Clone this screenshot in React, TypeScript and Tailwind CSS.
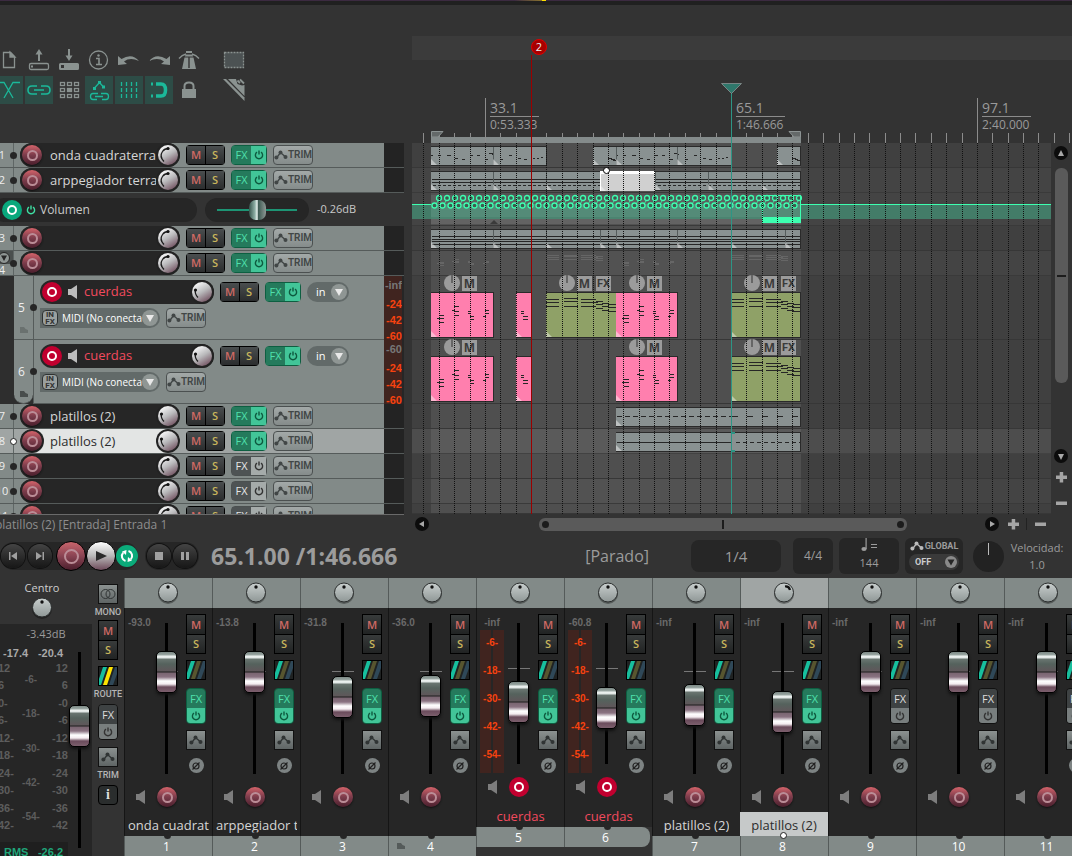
import React from "react";
import clsx from "clsx";

const PITCH = 15.375;
const gridX = (k: number) => Math.round(11.4 + PITCH * k);
const GRID = Array.from({ length: 160 }, (_, k) => k);

/* ---------- small glyphs ---------- */

function PowerIcon({ className }: { className?: string }) {
  return (
    <svg viewBox="0 0 10 10" className={clsx("h-2.5 w-2.5", className)} fill="none" stroke="currentColor" strokeWidth="1.4">
      <path d="M3 2.2a3.6 3.6 0 1 0 4 0M5 .5v4" />
    </svg>
  );
}

function EnvIcon({ className }: { className?: string }) {
  return (
    <svg viewBox="0 0 14 10" className={clsx("h-2.5 w-3.5 shrink-0", className)} fill="currentColor">
      <path d="M2.5 8 6.5 2.500 11.500 7" fill="none" stroke="currentColor" strokeWidth="1.300" />
      <circle cx="2.400" cy="7.600" r="2" />
      <circle cx="6.500" cy="2.500" r="2" />
      <circle cx="11.500" cy="7" r="2" />
    </svg>
  );
}

function SpeakerIcon({ className }: { className?: string }) {
  return (
    <svg viewBox="0 0 9 14" className={clsx("h-3.5 w-[9px]", className)} fill="currentColor">
      <path d="M0 4h3l6-4v14l-6-4H0z" />
    </svg>
  );
}

function FolderIcon({ className }: { className?: string }) {
  return (
    <svg viewBox="0 0 8 6" className={clsx("h-1.5 w-2", className)} fill="currentColor">
      <path d="M0 0h4l1.500 2L8 3v3H0z" />
    </svg>
  );
}

/* ---------- shared controls ---------- */

function RecordButton({ armed, label }: { armed?: boolean; label: string }) {
  return (
    <button
      aria-label={label}
      className={clsx(
        "flex h-5 w-5 shrink-0 items-center justify-center rounded-full",
        armed ? "bg-[#c1002f]" : "bg-gradient-to-b from-[#d4636a] via-[#7c3c4b] to-[#4c1f2d] shadow-[0_1px_2px_#111]"
      )}
    >
      <span className={clsx("rounded-full", armed ? "h-2.5 w-2.5 border-2 border-white" : "h-[11px] w-[11px] border-2 border-[#bb8d97]")} />
    </button>
  );
}

function PanKnob({ hard }: { hard?: boolean }) {
  return (
    <svg viewBox="0 0 22 24" className="h-6 w-[22px] shrink-0">
      <defs>
        <linearGradient id="pan" x1="0" y1="0" x2="0" y2="1">
          <stop offset="0" stopColor="#c9cfce" />
          <stop offset="1" stopColor="#8f9796" />
        </linearGradient>
      </defs>
      <circle cx="11" cy="13" r="10" fill="#00000055" />
      <circle cx="11" cy="11.500" r="9.500" fill="url(#pan)" stroke="#2b2e2e" />
      {hard ? (
        <path d="M12 5.500q4-.5 5 3.500" stroke="#111" strokeWidth="2.200" fill="none" />
      ) : (
        <circle cx="11" cy="6" r="1.700" fill="#111" />
      )}
    </svg>
  );
}

function VolumeKnob({ low }: { low?: boolean }) {
  return (
    <svg viewBox="0 0 24 24" className="h-6 w-6 shrink-0">
      <defs>
        <linearGradient id="vol" x1="0.200" y1="0" x2="0.800" y2="1">
          <stop offset="0" stopColor="#ffffff" />
          <stop offset="0.500" stopColor="#b9b9bb" />
          <stop offset="1" stopColor="#6e4c5c" />
        </linearGradient>
      </defs>
      <circle cx="12" cy="12" r="12" fill="#222" />
      <circle cx="12" cy="12" r="10" fill="url(#vol)" />
      <path d={low ? "M8 17.500q-3.500-3.500-2.500-8" : "M8 18.500q-5-5-1.500-10 2-3 6-3"} stroke="#1b1b1b" strokeWidth="1.300" fill="none" />
      <circle cx={low ? 5.500 : 12} cy={low ? 10 : 5.500} r="1.600" fill="#111" />
    </svg>
  );
}

function MuteSolo() {
  return (
    <div className="flex h-5 w-[39px] shrink-0 gap-px rounded-sm bg-black p-px text-[11px] leading-[18px] font-semibold">
      <button className="flex-1 bg-gradient-to-b from-[#4a4e4f] to-[#2b2d2e] text-[#cf6a64]">M</button>
      <button className="flex-1 bg-gradient-to-b from-[#4a4e4f] to-[#2b2d2e] text-[#c9b65c]">S</button>
    </div>
  );
}

function FxButtons({ on = true }: { on?: boolean }) {
  return (
    <div className={clsx("flex h-5 w-9 shrink-0 rounded-sm border text-[11px] leading-[18px]", on ? "border-[#0d5f41]" : "border-[#4b5050]")}>
      <button className={clsx("w-[19px]", on ? "bg-[#257a5c] text-[#4fe0ac]" : "bg-[#4e5354] text-[#e6e6e6]")}>FX</button>
      <button aria-label="FX bypass" className={clsx("flex flex-1 items-center justify-center", on ? "bg-[#42c598] text-[#0e5a3f]" : "bg-[#a5abaa] text-[#333]")}>
        <PowerIcon />
      </button>
    </div>
  );
}

function TrimButton() {
  return (
    <button className="flex h-5 w-10 shrink-0 items-center justify-center rounded-sm border border-[#4b5050] bg-gradient-to-b from-[#a3a9a8] to-[#858c8b] text-[#414646]">
      <EnvIcon />
      <span className="font-['Roboto',sans-serif] text-[10px] leading-[18px] font-semibold">TRIM</span>
    </button>
  );
}

const thumb =
  "[&::-webkit-slider-thumb]:appearance-none [&::-webkit-slider-thumb]:h-[42px] [&::-webkit-slider-thumb]:w-[21px] [&::-webkit-slider-thumb]:rounded-[5px] [&::-webkit-slider-thumb]:border [&::-webkit-slider-thumb]:border-black [&::-webkit-slider-thumb]:shadow-[0_2px_3px_#111] [&::-webkit-slider-thumb]:bg-[linear-gradient(#7d8a86_0px,#9aa7a3_3px,#eef3f1_4px,#dfe6e4_6px,#6a7671_7px,#55625d_12px,#5f575a_19px,#1d1d1d_20px,#7a6571_21px,#8a7281_25px,#ffffff_29px,#f4ecf0_32px,#6b4c5c_35px,#7c5f6d_40px)]";

function Fader({ value, max, height, label }: { value: number; max: number; height: "master" | "long" | "short"; label: string }) {
  return (
    <input
      type="range"
      min={0}
      max={max}
      defaultValue={value}
      aria-label={label}
      className={clsx(
        "block w-[21px] appearance-none bg-transparent bg-[linear-gradient(#000,#000)] bg-[length:3px_100%] bg-center bg-no-repeat [direction:rtl] [writing-mode:vertical-lr]",
        height === "master" && "h-[196px]",
        height === "long" && "h-[151px]",
        height === "short" && "h-[141px]",
        thumb
      )}
    />
  );
}

/* ---------- main toolbar ---------- */

function Tool({ label, on, children }: { label: string; on?: boolean; children: React.ReactNode }) {
  return (
    <button aria-label={label} className={clsx("h-7 w-7", on ? "bg-[#2d4c46] text-[#1bb99a]" : "text-[#8a9290]")}>
      <svg viewBox="0 0 28 28" className="h-7 w-7" fill="none" stroke="currentColor" strokeWidth="1.300">
        {children}
      </svg>
    </button>
  );
}

function Toolbar() {
  return (
    <div className="-ml-[5px] flex h-[138px] gap-[17px] pt-[41px]">
      <div className="flex flex-col gap-0.5">
        <div className="flex gap-0.5">
          <Tool label="New project">
            <path d="M8.500 6.500h7l4 4v11h-11z" />
            <path d="M15 6v5h5z" fill="currentColor" />
          </Tool>
          <Tool label="Open project">
            <rect x="4.500" y="17.500" width="19" height="6" rx="1.500" />
            <path d="M14 15V6" strokeWidth="2" />
            <path d="M10.500 8.500 14 3l3.500 5.500z" fill="currentColor" stroke="none" />
            <path d="M6 19.500h2v2H6z" fill="currentColor" stroke="none" />
          </Tool>
          <Tool label="Save project">
            <path d="M5.500 17h17q1.500 0 1.500 1.500v4q0 1.500-1.500 1.500h-17Q4 24 4 22.500v-4Q4 17 5.500 17zM6 19v3h3v-3z" fill="currentColor" stroke="none" fillRule="evenodd" />
            <path d="M14 3v8" strokeWidth="2" />
            <path d="M10.500 9.500 14 15l3.500-5.500z" fill="currentColor" stroke="none" />
          </Tool>
          <Tool label="Project settings">
            <circle cx="13.500" cy="14" r="9" />
            <path d="M11 12.500h3v6M11 18.500h6" strokeWidth="1.600" />
            <circle cx="13.500" cy="9.500" r="1.200" fill="currentColor" stroke="none" />
          </Tool>
          <Tool label="Undo">
            <path d="M3 10v9l9-1-3-2.500q6-4.500 15-.5Q17 6.500 6.500 13z" fill="currentColor" stroke="none" />
          </Tool>
          <Tool label="Redo">
            <path d="M25 10v9l-9-1 3-2.500q-6-4.500-15-.5Q11 6.500 21.500 13z" fill="currentColor" stroke="none" />
          </Tool>
          <Tool label="Metronome">
            <path d="M4 12.500Q7 9 11 8M24 12.500Q21 9 17 8" />
            <path d="M11 5h6v2h-6zM10.500 8.500h7l.5 2h-8zM9.500 11.500h3.800V22h1.400V11.500h3.800L21 23H7z" fill="currentColor" stroke="none" />
          </Tool>
        </div>
        <div className="flex gap-0.5">
          <Tool label="Auto crossfade" on>
            <path d="M2 6.500h7L18 22M25 6.500h-7L9 22" />
          </Tool>
          <Tool label="Item grouping" on>
            <path d="M12 10H7q-4 0-4 4t4 4h5M16 10h5q4 0 4 4t-4 4h-5M9 14h10" strokeWidth="1.600" />
          </Tool>
          <Tool label="Ripple editing">
            {[6, 12, 18].map((y) =>
              [5, 12, 19].map((x) => (
                <rect key={`${x}-${y}`} x={x + 0.5} y={y + 0.5} width="4" height="3" fill={x === 12 && y === 12 ? "currentColor" : "none"} />
              ))
            )}
          </Tool>
          <Tool label="Envelope locking" on>
            <path d="m9.500 12 5-5.500 4 4.500M13 17.500H8q-2.500 0-2.500 3T8 23.500h4M16 17.500h5q2.500 0 2.500 3t-2.500 3h-4M10 20.500h8" />
            <path d="M8 11h3v3H8zM13 5h3v3h-3zM17 9.500h3v3h-3z" fill="currentColor" stroke="none" />
          </Tool>
          <Tool label="Grid" on>
            <path d="M6.500 6v16M11.500 6v16M16.500 6v16M21.500 6v16" strokeDasharray="4 2" />
          </Tool>
          <Tool label="Snap" on>
            <path d="M11 8h5q4.500 0 4.500 6T16 20h-5" strokeWidth="3.500" />
            <path d="M6 6.500h2v3H6zM6 18.500h2v3H6z" fill="currentColor" stroke="none" />
          </Tool>
          <Tool label="Lock">
            <path d="M7 13h14v9H7z" fill="currentColor" stroke="none" />
            <path d="M9.500 13v-3q0-3.500 4.500-3.500t4.500 3.500v3" strokeWidth="2" />
          </Tool>
        </div>
      </div>
      <div className="flex flex-col gap-0.5">
        <Tool label="Marquee">
          <rect x="4.500" y="6.500" width="19" height="15" fill="#4c5253" strokeDasharray="2 1" />
        </Tool>
        <Tool label="Ruler">
          <path d="M3 3h3l18.500 18.500V25z" fill="currentColor" stroke="none" />
          <path d="M8 3h8l1.500 5 4.500 1.500 2.500-.5v11z" fill="currentColor" stroke="none" />
          <path d="M17.500 4.500 20 7M20 3.500l4 4" strokeWidth="1.800" />
        </Tool>
      </div>
    </div>
  );
}

/* ---------- track control panel ---------- */

interface Track {
  id: number;
  name?: string;
  fx: boolean;
  lowKnob?: boolean;
  selected?: boolean;
  folder?: boolean;
}

const topTracks: Track[] = [
  { id: 1, name: "onda cuadraterra", fx: true },
  { id: 2, name: "arppegiador terra", fx: true },
];
const midTracks: Track[] = [
  { id: 3, fx: true },
  { id: 4, fx: true, folder: true },
];
const lowTracks: Track[] = [
  { id: 7, name: "platillos (2)", fx: true, lowKnob: true },
  { id: 8, name: "platillos (2)", fx: true, lowKnob: true, selected: true },
  { id: 9, fx: false },
  { id: 10, fx: false },
  { id: 11, fx: false },
];

function TrackNumber({ track }: { track: Track }) {
  if (!track.folder) {
    return <span className="-ml-2 w-5 shrink-0 text-center text-[11px] text-[#eee]">{track.id}</span>;
  }
  return (
    <span className="-ml-2 flex w-5 shrink-0 flex-col items-center self-stretch text-[11px] leading-[11px] text-[#eee]">
      <button aria-label="Collapse folder" className="ml-1 flex h-3.5 w-full items-center justify-center bg-[#4a4f4e]">
        <svg viewBox="0 0 12 12" className="h-3 w-3">
          <circle cx="6" cy="6" r="5.500" fill="#8f9694" stroke="#262626" />
          <path d="M3 3.500h6L6 9z" fill="#262626" />
        </svg>
      </button>
      {track.id}
    </span>
  );
}

function TrackRow({ track }: { track: Track }) {
  const sel = track.selected;
  return (
    <div className={clsx("flex h-[25px] shrink-0 border-b border-[#555b5a]", sel ? "bg-[#a0a5a4]" : "bg-[#828a88]")}>
      <div className="flex flex-1 items-center overflow-hidden">
        <TrackNumber track={track} />
        <span className="relative ml-px w-px shrink-0 self-stretch bg-[#5f6665]">
          <span className={clsx("absolute top-[9px] -left-[3px] h-[7px] w-[7px] rounded-full", sel ? "border border-[#222] bg-white" : "bg-[#262626]")} />
        </span>
        <div
          className={clsx(
            "ml-1.5 flex h-6 w-40 shrink-0 items-center rounded-full text-[13px]",
            sel ? "bg-[#e3e5e4] text-[#2c2c2c]" : "bg-[#262626] text-[#d6d6d6]"
          )}
        >
          <span className="flex h-6 w-6 shrink-0 items-center justify-center rounded-full bg-[#262626]">
            <RecordButton label={`Arm track ${track.id}`} />
          </span>
          <span className="ml-1.5 flex-1 overflow-hidden leading-5 whitespace-nowrap">{track.name}</span>
          <VolumeKnob low={track.lowKnob} />
        </div>
        <div className="ml-1.5 flex gap-1.5">
          <MuteSolo />
          <FxButtons on={track.fx} />
          <TrimButton />
        </div>
      </div>
      <div className="w-5 shrink-0 bg-[#232323]" />
    </div>
  );
}

function ArrowDisc() {
  return (
    <span className="pointer-events-none absolute top-0.5 right-0.5 flex h-4 w-4 items-center justify-center rounded-full bg-[#8f9694]">
      <svg viewBox="0 0 8 7" className="h-[7px] w-2">
        <path d="M0 0h8L4 7z" fill="#e9e9e9" />
      </svg>
    </span>
  );
}

function ArmedTrack({ id, levels, last }: { id: number; levels: string[]; last?: boolean }) {
  return (
    <div className="flex h-16 shrink-0 bg-[#2e2e2e]">
      <div className={clsx("relative ml-3.5 w-[19px] shrink-0 border-b border-[#555b5a] bg-[#828a88]", last && "rounded-b-xl")}>
        <span className="block pt-6 pr-1 text-center text-[12px] leading-4 text-[#eee]">{id}</span>
        <FolderIcon className={clsx("absolute bottom-1.5 left-1.5", last ? "text-[#484d4c]" : "text-[#6a716f]")} />
      </div>
      <div className="relative flex flex-1 flex-col gap-1 border-b border-l border-[#555b5a] bg-[#828a88] pt-1 pl-1.5">
        <span className="absolute top-7 -left-1 h-[7px] w-[7px] rounded-full bg-[#262626]" />
        <div className="flex items-center">
          <div className="flex h-6 w-[174px] shrink-0 items-center rounded-full bg-[#262626] pl-0.5 text-[13px] text-[#f24a5e]">
            <RecordButton armed label={`Disarm track ${id}`} />
            <SpeakerIcon className="ml-1.5 text-[#bcbcbc]" />
            <span className="ml-[7px] flex-1">cuerdas</span>
            <VolumeKnob low />
          </div>
          <div className="ml-1.5 flex gap-1.5">
            <MuteSolo />
            <FxButtons />
            <label className="relative h-5 w-[42px] rounded-full bg-[#626a69] text-[11px] text-white">
              <select aria-label="Monitor mode" className="h-5 w-full appearance-none pl-[9px] leading-5 outline-none">
                <option>in</option>
              </select>
              <ArrowDisc />
            </label>
          </div>
        </div>
        <div className="flex items-center gap-1.5">
          <label className="relative flex h-5 w-[120px] items-center rounded-r-full bg-[#626a69] pl-0.5 text-[10px] text-white">
            <button className="h-4 w-4 shrink-0 rounded-sm border border-[#2e3232] bg-[#9aa09f] font-['Roboto',sans-serif] text-[8px] leading-[7px] font-bold text-[#333]">
              IN
              <br />
              FX
            </button>
            <select aria-label="Input" className="h-5 w-[84px] appearance-none overflow-hidden pl-1 whitespace-nowrap outline-none">
              <option>MIDI (No conecta</option>
            </select>
            <ArrowDisc />
          </label>
          <TrimButton />
        </div>
      </div>
      <div className="flex w-5 shrink-0 flex-col overflow-hidden border-r-2 border-[#262626] bg-[#40241f] pt-px text-right font-['Liberation_Sans',sans-serif] text-[11px] leading-4 font-bold text-[#f7420f]">
        {levels.map((l, i) => (
          <span key={l + i} className={clsx("-ml-1 whitespace-nowrap", i === 0 && "pb-[3px] text-[#777]")}>
            {l}
          </span>
        ))}
      </div>
    </div>
  );
}

function EnvelopeLane() {
  return (
    <div className="flex h-[33px] shrink-0 items-center text-[#c9c9c9]">
      <div className="-ml-2 flex h-6 w-[205px] shrink-0 items-center rounded-full bg-[#262626] pl-2.5 text-[12px]">
        <button aria-label="Arm envelope" className="flex h-5 w-5 items-center justify-center rounded-full bg-[#09a87c]">
          <span className="h-2.5 w-2.5 rounded-full border-2 border-white" />
        </button>
        <PowerIcon className="ml-1 text-[#3fe0a4]" />
        <span className="ml-1">Volumen</span>
      </div>
      <div className="ml-2 flex h-6 w-[104px] shrink-0 items-center rounded-full bg-[#262626] px-3">
        <input
          type="range"
          aria-label="Volumen"
          defaultValue={50}
          className="h-5 w-full appearance-none bg-[linear-gradient(#1d9474,#1d9474)] bg-[length:100%_2px] bg-center bg-no-repeat [&::-webkit-slider-thumb]:h-5 [&::-webkit-slider-thumb]:w-[17px] [&::-webkit-slider-thumb]:appearance-none [&::-webkit-slider-thumb]:rounded-[7px] [&::-webkit-slider-thumb]:bg-[linear-gradient(90deg,#35534b,#8fb0a6_35%,#e8f2ef_48%,#3d5a52_55%,#8d9794)]"
        />
      </div>
      <span className="ml-2 text-[11px]">-0.26dB</span>
    </div>
  );
}

function TrackPanel() {
  return (
    <div className="flex h-[371px] w-[404px] flex-col overflow-hidden">
      {topTracks.map((t) => (
        <TrackRow key={t.id} track={t} />
      ))}
      <EnvelopeLane />
      {midTracks.map((t) => (
        <TrackRow key={t.id} track={t} />
      ))}
      <ArmedTrack id={5} levels={["-inf", "-24", "-42", "-60"]} />
      <ArmedTrack id={6} levels={["-60", "-24", "-42", "-60"]} last />
      {lowTracks.map((t) => (
        <TrackRow key={t.id} track={t} />
      ))}
    </div>
  );
}

/* ---------- arrange view ---------- */

type Note = [number, number, number];

const pinkNotes: Note[] = [
  [8, 22, 5], [6, 25, 7], [8, 29, 5], [23, 13, 5], [21, 17, 3], [23, 18, 5], [23, 22, 5],
  [37, 18, 3], [37, 20, 3], [39, 23, 4], [39, 26, 4], [54, 17, 4], [54, 20, 4], [52, 23, 3],
];
const pinkTail: Note[] = [[5, 18, 3], [5, 20, 3], [7, 23, 5], [7, 26, 5]];
const greenNotes: Note[] = [
  [0, 6, 13], [0, 9, 13], [0, 13, 13], [18, 5, 14], [18, 8, 14], [18, 13, 14], [35, 6, 15], [35, 9, 17], [35, 13, 15],
  [50, 8, 7], [50, 11, 7], [50, 15, 7], [56, 10, 7], [56, 13, 7], [56, 17, 7], [62, 11, 8], [62, 14, 8], [62, 18, 8],
];
const melody: Note[] = [
  [0, 8, 2], [7, 8, 3], [16, 8, 4], [24, 11, 3], [31, 12, 3], [39, 8, 3], [46, 8, 3], [54, 12, 3], [58, 6, 4], [61, 7, 2],
  [69, 12, 3], [78, 8, 3], [87, 11, 3], [93, 12, 3], [102, 11, 2], [106, 11, 2], [110, 10, 2],
];
const melodyStart: Note[] = [[15, 11, 4], [18, 12, 4], [20, 13, 3], ...melody.map(([x, y, w]): Note => [x + 23, y, w])];
const melodyEnd: Note[] = [[15, 11, 4], [18, 12, 3], [20, 13, 3]];
const straight = (w: number, ...ys: number[]) => ys.map((y): Note => [1, y, w]);
const dashes = (from: number, to: number, step: number, len: number, y: number) => {
  const out: Note[] = [];
  for (let x = from; x < to; x += step) out.push([x, y, len]);
  return out;
};

const tones = {
  gray: "border-y border-r border-[#2a2a2a] bg-[#899191]",
  white: "border-t-3 border-l border-white bg-[#d0d0d0]",
  pink: "border-y border-r border-[#2a2a2a] bg-[#ff7fae]",
  green: "border-y border-r border-[#2a2a2a] bg-[#8fa167]",
};

interface ClipProps {
  x: number;
  w: number;
  tone?: keyof typeof tones;
  tall?: boolean;
  notes: Note[];
  cuts?: number[];
}

function Clip({ x, w, tone = "gray", tall, notes, cuts = [0] }: ClipProps) {
  const h = tall ? 46 : 20;
  return (
    <div className={clsx("absolute overflow-hidden", tones[tone], tall ? "top-4 h-[46px]" : "top-[3px] h-5")} style={{ left: x, width: w }}>
      <svg width={w} height={h} shapeRendering="crispEdges" className="block">
        {notes.map(([nx, ny, nw], i) => (
          <rect key={i} x={nx} y={ny} width={nw} height="1" fill="#262626" />
        ))}
        {cuts.map((c) => (
          <g key={c}>
            {c > 0 && <rect x={c} y="0" width="1" height={h} fill="#555c5c" />}
            <path d={`M${c} ${h - 8}l6 6h-6z`} fill="#ffffff70" shapeRendering="auto" />
          </g>
        ))}
      </svg>
    </div>
  );
}

function ClipButtons({ x, fx }: { x: number; fx?: boolean }) {
  return (
    <div className="absolute -top-px flex items-end gap-0.5 text-[12px] leading-[15px] font-bold text-[#3b3b3b]" style={{ left: x }}>
      <button aria-label="Item volume" className="flex h-4 w-4 justify-center rounded-full bg-[#9b9b9b]">
        <span className="h-2 w-0.5 bg-[#666]" />
      </button>
      <button className="h-[15px] w-[15px] bg-[#9b9b9b]">M</button>
      {fx && <button className="ml-0.5 h-[15px] w-[15px] bg-[#9b9b9b] font-['Roboto',sans-serif] text-[11px]">FX</button>}
    </div>
  );
}

function Lane({ size = "short", shade, children }: { size?: "short" | "tall" | "env" | "fill"; shade?: "alt" | "selected"; children?: React.ReactNode }) {
  return (
    <div
      className={clsx(
        "relative w-full border-b border-[#00000022]",
        size === "short" && "h-[25px] shrink-0",
        size === "tall" && "h-16 shrink-0",
        size === "env" && "h-[33px] shrink-0",
        size === "fill" && "flex-1",
        shade === "selected" ? "bg-[#4d4d4d]" : shade === "alt" ? "bg-[#444444]" : "bg-[#404040]"
      )}
    >
      <div className="absolute inset-y-0 left-[19px] w-[370px] bg-white/8" />
      {children}
    </div>
  );
}

function EnvelopePoints() {
  const points = Array.from({ length: 46 }, (_, i) => i);
  return (
    <svg width="390" height="33" className="absolute top-0 left-0" fill="none">
      <g stroke="#3dffb0" strokeWidth="1.300">
        {points.map((i) => (
          <g key={i} fill="#3f5a50">
            <path d={`M${24 + i * 8} 11l2-3`} strokeWidth=".8" />
            <circle cx={27 + i * 8} cy="5" r="2.500" />
            <circle cx={22.500 + i * 8} cy="12.500" r="2.500" />
          </g>
        ))}
      </g>
      <rect x="350.500" y="2.500" width="38" height="26" stroke="#3dffb0" />
      <rect x="350" y="24" width="39" height="6" fill="#3dffb0" />
      <path d="M78 31l4-4 4 4z" fill="#3b3b3b" />
    </svg>
  );
}

function Ruler() {
  const labels = [
    { k: 4, bar: "33.1", time: "0:53.333" },
    { k: 20, bar: "65.1", time: "1:46.666" },
    { k: 36, bar: "97.1", time: "2:40.000" },
  ];
  return (
    <div className="relative h-[83px] shrink-0 overflow-hidden">
      {GRID.map((k) => (
        <span key={k} className="absolute bottom-0 h-2.5 w-px bg-[#8c8c8c]" style={{ left: gridX(k) }} />
      ))}
      <span className="absolute bottom-0 left-[19px] h-1.5 w-[370px] bg-[#848b8b]" />
      <svg width="370" height="6" className="absolute bottom-1.5 left-[19px]">
        <path d="M.5 6V.5H12L7 6zM369.500 6V.5H358l5 5.500z" fill="#646969" stroke="#8c9393" />
      </svg>
      {labels.map((l) => (
        <div key={l.k} className="absolute bottom-0 h-[45px] border-l border-[#8c8c8c] pl-1 text-[#9a9a9a]" style={{ left: gridX(l.k) }}>
          <div className="w-[49px] border-b border-[#8c8c8c] pt-0.5 text-[14px] leading-4">{l.bar}</div>
          <div className="text-[12px] leading-4">{l.time}</div>
        </div>
      ))}
    </div>
  );
}

function Arrange() {
  return (
    <div className="relative flex h-[371px] min-w-0 flex-1 flex-col overflow-hidden">
      <Lane>
        <Clip x={19} w={116} notes={melody} cuts={[0, 62]} />
        <Clip x={181} w={139} notes={melodyStart} cuts={[0, 23, 84]} />
        <Clip x={365} w={24} notes={melodyEnd} />
      </Lane>
      <Lane shade="alt">
        <Clip x={19} w={370} notes={[...straight(368, 7, 10), ...dashes(2, 368, 5, 3, 13)]} cuts={[0, 62, 115, 224, 277, 331]} />
        <Clip x={188} w={55} tone="white" notes={[]} />
      </Lane>
      <Lane size="env" shade="alt">
        <div className="absolute inset-x-0 top-[11px] h-[15px] bg-[#43c295]/45" />
        <div className="absolute top-[11px] right-0 left-[389px] h-px bg-[#3dffb0]" />
        <div className="absolute top-[11px] left-0 h-px w-[19px] bg-[#3dffb0]" />
        <div className="absolute top-0.5 left-[19px] h-[22px] w-[370px] bg-[#8fb5a6]/15" />
        <div className="absolute top-[26px] left-[19px] h-[5px] w-[370px] bg-white/10" />
        <EnvelopePoints />
      </Lane>
      <Lane>
        <Clip x={19} w={370} notes={straight(368, 6, 9, 11, 14)} cuts={[0, 62, 115, 169, 185, 246, 300, 354]} />
      </Lane>
      <Lane shade="alt">
        <svg width="390" height="24" className="absolute" shapeRendering="crispEdges">
          {[134, 319].map((x) =>
            greenNotes.slice(0, 12).map(([nx, ny, nw], i) => <rect key={`${x}-${i}`} x={x + nx} y={Math.round(ny / 2) + 1} width={nw} height="1" fill="#666" />)
          )}
          {[19, 204].map((x) =>
            pinkNotes.map(([nx, ny, nw], i) => <rect key={`${x}-${i}`} x={x + nx} y={Math.round(ny / 3) + 4} width={nw} height="1" fill="#666" />)
          )}
        </svg>
      </Lane>
      <Lane size="tall">
        <ClipButtons x={32} />
        <ClipButtons x={147} fx />
        <ClipButtons x={217} />
        <ClipButtons x={332} fx />
        <Clip x={19} w={63} tall tone="pink" notes={pinkNotes} />
        <Clip x={104} w={16} tall tone="pink" notes={pinkTail} />
        <Clip x={134} w={71} tall tone="green" notes={greenNotes} />
        <Clip x={204} w={62} tall tone="pink" notes={pinkNotes} />
        <Clip x={319} w={70} tall tone="green" notes={greenNotes} />
      </Lane>
      <Lane size="tall">
        <ClipButtons x={32} />
        <ClipButtons x={217} />
        <ClipButtons x={332} fx />
        <Clip x={19} w={63} tall tone="pink" notes={pinkNotes} />
        <Clip x={104} w={16} tall tone="pink" notes={pinkTail} />
        <Clip x={204} w={62} tall tone="pink" notes={pinkNotes} />
        <Clip x={319} w={70} tall tone="green" notes={greenNotes} />
      </Lane>
      <Lane>
        <Clip x={204} w={185} notes={[...dashes(1, 114, 8, 5, 8), ...dashes(116, 182, 15, 6, 8)]} />
      </Lane>
      <Lane shade="selected">
        <Clip x={204} w={185} notes={[[1, 9, 114], ...dashes(120, 184, 7, 4, 9)]} />
      </Lane>
      <Lane />
      <Lane shade="alt" />
      <Lane size="fill" />
      {GRID.map((k) => (
        <span key={k} className="pointer-events-none absolute inset-y-0 w-px bg-[repeating-linear-gradient(#111_0px,#111_1px,transparent_1px,transparent_2px)]" style={{ left: gridX(k) }} />
      ))}
      <span className="absolute top-6 left-[191px] h-[7px] w-[7px] rounded-full border border-black bg-white" />
      <span className="absolute top-[289px] left-[319px] h-5 w-1 border-y-2 border-[#2d9585]" />
    </div>
  );
}

function ArrowButton({ dir, className }: { dir: "up" | "down" | "left" | "right"; className?: string }) {
  const d = { up: "M4 10h6L7 4z", down: "M4 5h6l-3 6z", left: "M9 4v6L4 7z", right: "M5 4v6l5-3z" }[dir];
  return (
    <button aria-label={`Scroll ${dir}`} className={clsx("h-3.5 w-3.5 shrink-0 rounded-full bg-[#0c0c0c]", className)}>
      <svg viewBox="0 0 14 14" className="h-3.5 w-3.5">
        <path d={d} fill="#a8a8a8" />
      </svg>
    </button>
  );
}

function ZoomButton({ plus }: { plus?: boolean }) {
  return (
    <button aria-label={plus ? "Zoom in" : "Zoom out"} className="h-3 w-3 shrink-0">
      <svg viewBox="0 0 12 12" className="h-3 w-3" fill="#a5a5a5">
        <path d="M1 4.500h11v3.500H1z" />
        {plus && <path d="M4.700 1h3.500v10.500H4.700z" />}
      </svg>
    </button>
  );
}

function VerticalScroll() {
  return (
    <div className="flex w-[21px] shrink-0 flex-col items-center pt-[3px] pr-px">
      <ArrowButton dir="up" />
      <div className="flex w-[13px] flex-1 flex-col pt-2">
        <div className="flex h-[215px] items-center justify-center rounded-md bg-[#5a5a5a]">
          <span className="h-0.5 w-[9px] bg-[#1c1c1c]" />
        </div>
      </div>
      <ArrowButton dir="down" />
      <div className="flex h-[51px] flex-col items-center gap-[14px] pt-2">
        <ZoomButton plus />
        <ZoomButton />
      </div>
    </div>
  );
}

function HorizontalScroll() {
  return (
    <div className="flex h-5 shrink-0 items-center pr-[26px] pl-[3px]">
      <ArrowButton dir="left" />
      <div className="flex flex-1 pl-[110px]">
        <div className="flex h-[13px] w-[368px] items-center justify-between rounded-md bg-[#5a5a5a] px-[3px]">
          <span className="h-[7px] w-[7px] rounded-full bg-[#1c1c1c]" />
          <span className="h-[9px] w-0.5 bg-[#1c1c1c]" />
          <span className="h-[7px] w-[7px] rounded-full bg-[#1c1c1c]" />
        </div>
      </div>
      <ArrowButton dir="right" />
      <div className="ml-2 flex items-center gap-[7px]">
        <ZoomButton plus />
        <span className="h-3 w-px bg-[#222]" />
        <ZoomButton />
      </div>
    </div>
  );
}

function Timeline() {
  return (
    <div className="relative flex min-w-0 flex-1 flex-col overflow-hidden">
      <div className="mt-[31px] h-6 shrink-0 bg-[#3b3b3b]" />
      <Ruler />
      <div className="flex">
        <Arrange />
        <VerticalScroll />
      </div>
      <HorizontalScroll />
      {/* marker and edit cursor run over ruler and lanes */}
      <span className="absolute top-[50px] bottom-5 left-[119px] w-px bg-[#9c0000]" />
      <span className="absolute top-[34px] left-[119px] h-4 w-4 rounded-full border border-[#e00000] bg-[#a80000] text-center text-[11px] leading-[14px] text-[#eee]">2</span>
      <span className="absolute top-[88px] bottom-5 left-[319px] w-px bg-[#2d9585]" />
      <svg viewBox="0 0 21 11" className="absolute top-[78px] left-[309px] h-[11px] w-[21px]">
        <path d="M.5.500h20L10.500 10.500z" fill="#2f776b" stroke="#8c9393" strokeWidth=".8" />
      </svg>
    </div>
  );
}

/* ---------- transport ---------- */

function RoundButton({ label, children }: { label: string; children: React.ReactNode }) {
  return (
    <button aria-label={label} className="flex h-6 w-6 items-center justify-center rounded-full bg-gradient-to-b from-[#444] to-[#171717] text-[#a0a0a0] shadow-[0_0_0_1px_#111]">
      <svg viewBox="0 0 12 12" className="h-3 w-3" fill="currentColor">
        {children}
      </svg>
    </button>
  );
}

function Transport() {
  return (
    <div className="flex h-11 shrink-0 items-center overflow-hidden text-[#9c9c9c]">
      <div className="flex h-7 shrink-0 items-center rounded-full bg-[#262626] pl-px">
        <div className="mr-1 flex gap-[3px]">
          <RoundButton label="Go to start">
            <path d="M2 2h1.500v8H2zM10 2v8L4 6z" />
          </RoundButton>
          <RoundButton label="Go to end">
            <path d="M8.500 2H10v8H8.500zM2 2v8l6-4z" />
          </RoundButton>
        </div>
        <button aria-label="Record" className="flex h-[30px] w-[30px] items-center justify-center rounded-full border border-black bg-gradient-to-b from-[#c9656c] via-[#8a4453] to-[#4c1f2d]">
          <span className="h-[15px] w-[15px] rounded-full border-2 border-[#bb8d97]" />
        </button>
        <button aria-label="Play" className="flex h-[30px] w-[30px] items-center justify-center rounded-full border border-black bg-gradient-to-b from-white via-[#b8b8b8] to-[#6e4c5c]">
          <svg viewBox="0 0 12 12" className="h-3 w-3">
            <path d="M1 1l11 5L1 11z" fill="#2a2a2a" />
          </svg>
        </button>
        <button aria-label="Repeat" className="flex h-[22px] w-[22px] items-center justify-center rounded-full bg-[#0bab7a]">
          <svg viewBox="0 0 16 16" className="h-4 w-4" fill="none" stroke="#fff" strokeWidth="2">
            <path d="M6.500 13A5 5 0 0 1 4.200 4.800M9.500 3a5 5 0 0 1 2.300 8.200" />
            <path d="M3 3.500 7.500 2 7 7zM13 12.500 8.500 14 9 9z" fill="#fff" stroke="none" />
          </svg>
        </button>
      </div>
      <div className="ml-[7px] flex h-7 shrink-0 items-center gap-0.5 rounded-full bg-[#262626] px-0.5">
        <RoundButton label="Stop">
          <path d="M2 2h8v8H2z" />
        </RoundButton>
        <RoundButton label="Pause">
          <path d="M2 2h3v8H2zM7 2h3v8H7z" />
        </RoundButton>
      </div>
      <span className="ml-3 text-[23px] font-bold whitespace-nowrap">65.1.00 /1:46.666</span>
      <div className="ml-auto flex shrink-0 items-center">
        <span className="mr-[42px] text-[16px]">[Parado]</span>
        <button className="h-8 w-[90px] rounded-lg bg-[#262626] text-[15px]">1/4</button>
        <button className="ml-3 h-9 w-10 rounded-md bg-[#262626] text-[12px]">4/4</button>
        <div className="ml-1.5 flex h-9 w-[60px] flex-col items-center justify-between rounded-md bg-[#262626] pb-1 text-[11px] leading-[14px]">
          <svg viewBox="0 0 16 14" className="h-3.5 w-4" fill="currentColor">
            <ellipse cx="3" cy="11" rx="2.600" ry="2" />
            <path d="M4.500 0h1.200v11H4.500zM10 6h6v1h-6zM10 9h6v1h-6z" />
          </svg>
          <span>144</span>
        </div>
        <div className="ml-1.5 flex h-9 w-[58px] flex-col items-center justify-between rounded-md bg-[#262626] pt-0.5 pb-1 font-['Roboto',sans-serif] text-[9px] leading-3 font-bold">
          <span className="flex items-center gap-px">
            <EnvIcon className="text-[#bbb]" />
            GLOBAL
          </span>
          <label className="relative h-4 w-[50px] rounded-full bg-[#3a3a3a] text-[#ccc]">
            <select aria-label="Global automation" className="block h-4 w-full appearance-none pl-1.5 outline-none">
              <option>OFF</option>
            </select>
            <svg viewBox="0 0 12 12" className="pointer-events-none absolute top-0.5 right-0.5 h-3 w-3">
              <circle cx="6" cy="6" r="6" fill="#8a8a8a" />
              <path d="M2.500 3.500h7l-3.500 6z" fill="#262626" />
            </svg>
          </label>
        </div>
        <button aria-label="Playrate" className="ml-2.5 flex h-[31px] w-[31px] justify-center rounded-full bg-[#222]">
          <span className="mt-0.5 h-3 w-px bg-[#bbb]" />
        </button>
        <div className="mr-1.5 ml-1 w-[58px] text-center text-[11px] leading-[17px]">
          <div>Velocidad:</div>
          <div>1.0</div>
        </div>
      </div>
    </div>
  );
}

/* ---------- mixer ---------- */

function RouteButton({ bright }: { bright?: boolean }) {
  return (
    <button aria-label="Routing" className="block h-5 w-5 border border-black bg-[#1f2222]">
      <svg viewBox="0 0 18 18" className="h-[18px] w-[18px]">
        <path d="M0 18V12L4 0h4L2 18z" fill="#17bf9d" />
        <path d="M4 18 10 0h4L8 18z" fill={bright ? "#ffe300" : "#57552f"} />
        <path d="M10 18 16 0h2v7l-4 11z" fill="#2f4858" />
      </svg>
    </button>
  );
}

function StackMuteSolo() {
  return (
    <div className="flex w-5 flex-col gap-px border border-black bg-black text-[11px] leading-[18px] font-semibold">
      <button className="h-[19px] bg-gradient-to-b from-[#383b3b] to-[#212323] text-[#cf6a64]">M</button>
      <button className="h-[18px] bg-gradient-to-b from-[#383b3b] to-[#212323] text-[#c9b65c]">S</button>
    </div>
  );
}

function StackFx({ on }: { on?: boolean }) {
  return (
    <div className={clsx("flex w-5 flex-col overflow-hidden rounded-sm border text-[11px] leading-[18px]", on ? "border-[#0d5f41]" : "border-[#111]")}>
      <button className={clsx("h-[19px]", on ? "bg-[#257a5c] text-[#4fe0ac]" : "bg-[#3e4243] text-[#dcdcdc]")}>FX</button>
      <button aria-label="FX bypass" className={clsx("flex h-[15px] items-center justify-center", on ? "bg-[#42c598] text-[#0e5a3f]" : "bg-[#787e7e] text-[#333]")}>
        <PowerIcon />
      </button>
    </div>
  );
}

function StackEnv() {
  return (
    <button aria-label="Envelopes" className="flex h-5 w-5 items-center justify-center border border-[#111] bg-gradient-to-b from-[#8b9190] to-[#5f6565] text-[#303434]">
      <EnvIcon />
    </button>
  );
}

const condensed = "font-['Roboto',sans-serif] text-[9px] leading-3 font-medium text-[#b5b5b5]";

function Master() {
  const left = ["12", "6", "0-", "6-", "12-", "18-", "24-", "30-", "36-", "42-"];
  const right = ["12", "6", "-0", "-6", "-12", "-18", "-24", "-30", "-36", "-42"];
  return (
    <div className="flex w-[124px] shrink-0">
      <div className="flex w-[92px] shrink-0 flex-col overflow-hidden">
        <div className="flex h-[46px] shrink-0 flex-col items-center pt-0.5 pr-2 text-[11px] leading-4 text-[#cfcfcf]">
          Centro
          <PanKnob />
        </div>
        <div className="flex flex-1 flex-col bg-[#262626] font-['Liberation_Sans',sans-serif] text-[11px] font-bold text-[#5d5d5d]">
          <div className="h-5 text-center font-['Open_Sans',sans-serif] leading-5 font-normal text-[#9a9a9a]">-3.43dB</div>
          <div className="flex">
            <div className="flex w-[68px] flex-col">
              <div className="flex h-[15px] items-end justify-between pr-[5px] pl-[3px] leading-[11px] text-[#a9a9a9]">
                <span>-17.4</span>
                <span>-20.4</span>
              </div>
              <div className="flex h-[175px] justify-between">
                <div className="-ml-0.5 flex w-5 flex-col">
                  {left.map((v, i) => (
                    <div key={i} className="flex flex-1 items-center">
                      {v}
                    </div>
                  ))}
                </div>
                <div className="flex flex-col pt-[3px] text-[10px]">
                  {[-6, -18, -30, -42, -54].map((v) => (
                    <div key={v} className="flex h-[35px] items-center justify-center">{v}-</div>
                  ))}
                </div>
                <div className="flex w-6 flex-col">
                  {right.map((v, i) => (
                    <div key={i} className="flex flex-1 items-center justify-end">
                      {v}
                    </div>
                  ))}
                </div>
              </div>
              <div className="mt-2 flex justify-between bg-[#1f1f1f] pt-1 pr-[5px] pl-1 leading-3 text-[#1fa67a]">
                <span>RMS</span>
                <span>-26.2</span>
              </div>
            </div>
            <div className="ml-px pt-2">
              <Fader label="Master volume" value={101} max={154} height="master" />
            </div>
          </div>
        </div>
      </div>
      <div className="flex flex-1 flex-col items-center pt-1.5">
        <button aria-label="Mono" className="flex h-5 w-5 items-center justify-center border border-[#111] bg-gradient-to-b from-[#8b9190] to-[#5f6565]">
          <svg viewBox="0 0 16 12" className="h-3 w-4" fill="none" stroke="#303434">
            <circle cx="5.500" cy="6" r="4.500" />
            <circle cx="10.500" cy="6" r="4.500" />
          </svg>
        </button>
        <span className={clsx(condensed, "my-0.5")}>MONO</span>
        <StackMuteSolo />
        <div className="mt-1.5">
          <RouteButton bright />
        </div>
        <span className={clsx(condensed, "mt-0.5 mb-1")}>ROUTE</span>
        <StackFx />
        <div className="mt-[7px]">
          <StackEnv />
        </div>
        <span className={clsx(condensed, "mt-0.5 mb-1")}>TRIM</span>
        <button className="h-5 w-5 rounded-sm border border-black bg-[#2a2d2d] font-['Liberation_Serif',serif] text-[14px] leading-4 font-bold text-[#ddd]">i</button>
      </div>
    </div>
  );
}

interface StripData {
  id: number;
  peak: string;
  fader: number;
  name?: string;
  fx?: boolean;
  armed?: boolean;
  selected?: boolean;
  folder?: boolean;
}

const strips: StripData[] = [
  { id: 1, peak: "-93.0", fader: 81, name: "onda cuadrat", fx: true },
  { id: 2, peak: "-13.8", fader: 81, name: "arppegiador t", fx: true },
  { id: 3, peak: "-31.8", fader: 56, fx: true },
  { id: 4, peak: "-36.0", fader: 57, fx: true, folder: true },
  { id: 5, peak: "-inf", fader: 41, name: "cuerdas", fx: true, armed: true },
  { id: 6, peak: "-60.8", fader: 35, name: "cuerdas", fx: true, armed: true },
  { id: 7, peak: "-inf", fader: 48, name: "platillos (2)", fx: true },
  { id: 8, peak: "-inf", fader: 41, name: "platillos (2)", fx: true, selected: true },
  { id: 9, peak: "-inf", fader: 81 },
  { id: 10, peak: "-inf", fader: 81 },
  { id: 11, peak: "-inf", fader: 81 },
  { id: 12, peak: "-inf", fader: 81 },
];

function Strip({ s }: { s: StripData }) {
  return (
    <div className="flex w-[88px] shrink-0 flex-col">
      <div className={clsx("flex h-[30px] shrink-0 justify-center border-l border-[#555b5a] pt-[3px] pr-0.5", s.selected ? "bg-[#a0a5a4]" : "bg-[#828a88]")}>
        <PanKnob hard={s.selected} />
      </div>
      <div className={clsx("flex flex-col border-l border-[#151515] bg-[#262626]", s.armed ? "h-[219px]" : "h-[229px]")}>
        <div className={clsx("flex", s.armed ? "h-[166px]" : "h-[176px]")}>
          <div className={clsx("w-[30px] shrink-0 pt-2 font-['Liberation_Sans',sans-serif] text-[10px] leading-[14px] font-bold text-[#6a6a6a]", s.armed ? "text-center" : "pl-[3px]")}>
            <div className="whitespace-nowrap">{s.peak}</div>
            {s.armed && (
              <div className="ml-[3px] flex h-[143px] w-6 flex-col gap-4 bg-[linear-gradient(90deg,#40241f_11px,#262626_11px,#262626_13px,#40241f_13px)] pt-[7px] leading-3 text-[#f7420f]">
                {["-6-", "-18-", "-30-", "-42-", "-54-"].map((v) => (
                  <span key={v}>{v}</span>
                ))}
              </div>
            )}
          </div>
          <div className="relative ml-px pt-[15px]">
            <span className={clsx("absolute left-0 h-px w-[22px] bg-[#777]", s.armed ? "top-[60px]" : "top-[63px]")} />
            <div className="relative">
              <Fader label={`Volume track ${s.id}`} value={s.fader} max={s.armed ? 99 : 109} height={s.armed ? "short" : "long"} />
            </div>
          </div>
          <div className="ml-[9px] flex flex-col items-center pt-1.5">
            <StackMuteSolo />
            <div className="mt-1.5">
              <RouteButton />
            </div>
            <div className="mt-2">
              <StackFx on={s.fx} />
            </div>
            <div className="mt-1.5">
              <StackEnv />
            </div>
            <button aria-label="Phase" className="mt-2 flex h-[15px] w-[15px] items-center justify-center rounded-full bg-[#7d8383] text-[#222]">
              <svg viewBox="0 0 10 10" className="h-2.5 w-2.5" fill="none" stroke="currentColor" strokeWidth="1.200">
                <circle cx="5" cy="5" r="3" />
                <path d="m1.500 8.500 7-7" />
              </svg>
            </button>
          </div>
        </div>
        <div className="flex h-[26px] items-center pl-[11px]">
          <SpeakerIcon className="text-[#7d7d7d]" />
          <span className="ml-3">
            <RecordButton armed={s.armed} label={`Arm track ${s.id}`} />
          </span>
        </div>
        <div
          className={clsx(
            "mt-auto flex h-6 [justify-content:safe_center] overflow-hidden px-[3px] text-[13px] leading-[26px] whitespace-nowrap",
            s.armed && "text-[#f24a5e]",
            s.selected && "-ml-px bg-[#c6c9c9] text-[#2c2c2c]",
            !s.armed && !s.selected && "text-[#d6d6d6]"
          )}
        >
          <span className="overflow-hidden">{s.name}</span>
        </div>
      </div>
      <div className={clsx("relative h-5 border-l border-[#555b5a] bg-[#828a88] pt-0.5 pr-1 text-center text-[12px] leading-[18px] text-white", s.id === 6 && "mr-0.5 rounded-r-lg")}>
        <span className={clsx("absolute -top-1 left-[39px] h-[7px] w-[7px] rounded-full", s.selected ? "border border-[#222] bg-white" : "bg-[#262626]")} />
        {s.folder && <FolderIcon className="absolute top-1.5 left-2 h-2 w-2 text-[#555b5a]" />}
        {s.id}
      </div>
    </div>
  );
}

function Mixer() {
  return (
    <div className="flex min-h-0 flex-1 overflow-hidden">
      <Master />
      <div className="flex min-w-0 flex-1 overflow-hidden">
        {strips.map((s) => (
          <Strip key={s.id} s={s} />
        ))}
      </div>
    </div>
  );
}

export default function App() {
  return (
    <div className="flex h-screen w-full flex-col overflow-hidden bg-[#333333] font-['Open_Sans','Noto_Sans',sans-serif] text-[#9c9c9c]">
      <div className="h-[5px] shrink-0 bg-[#202020]">
        <div className="h-px bg-[linear-gradient(90deg,#3b2a40_48%,#8a7430_50.6%,#ffe000_50.6%,#ffe000_50.9%,#3b2a40_50.9%)]" />
      </div>
      <div className="flex shrink-0">
        <div className="w-[412px] shrink-0 overflow-hidden">
          <Toolbar />
          <TrackPanel />
          <div className="-ml-[5px] w-[409px] border-t border-[#6a6a6a] text-[12px] leading-[19px] text-[#8e8e8e]">platillos (2) [Entrada] Entrada 1</div>
        </div>
        <Timeline />
      </div>
      <Transport />
      <Mixer />
    </div>
  );
}
